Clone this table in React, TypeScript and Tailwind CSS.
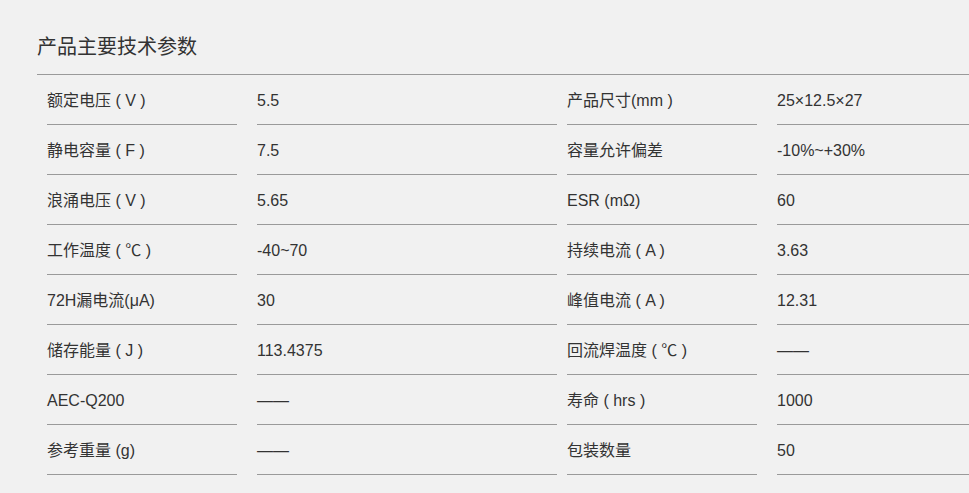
import React from 'react'

const rows: [string, string, string, string][] = [
  ['额定电压 ( V )', '5.5', '产品尺寸(mm )', '25×12.5×27'],
  ['静电容量 ( F )', '7.5', '容量允许偏差', '-10%~+30%'],
  ['浪涌电压 ( V )', '5.65', 'ESR (mΩ)', '60'],
  ['工作温度 ( ℃ )', '-40~70', '持续电流 ( A )', '3.63'],
  ['72H漏电流(μA)', '30', '峰值电流 ( A )', '12.31'],
  ['储存能量 ( J )', '113.4375', '回流焊温度 ( ℃ )', '——'],
  ['AEC-Q200', '——', '寿命 ( hrs )', '1000'],
  ['参考重量 (g)', '——', '包装数量', '50'],
]

function Cell({ text, wide }: { text: string; wide?: boolean }) {
  return (
    <div
      className={
        (wide ? 'w-[300px] ml-[20px] ' : 'w-[190px] ml-[10px] ') +
        'h-[50px] shrink-0 flex items-center border-b border-[#9a9a9a] text-[16px] text-[#333] whitespace-pre'
      }
    >
      <span className="pt-[3px]">{text}</span>
    </div>
  )
}

export default function App() {
  return (
    <div
      className="w-full h-[493px] overflow-hidden bg-[#f1f1f1]"
      style={{ fontFamily: '"Liberation Sans", "Noto Sans CJK SC", sans-serif' }}
    >
      <div className="pl-[37px]">
        {/* 标题 */}
        <div className="w-[1040px] pt-[35px] pb-[15px] border-b border-[#9a9a9a]">
          <h2 className="text-[20px] leading-[24px] text-[#333] font-normal">产品主要技术参数</h2>
        </div>

        {/* 参数表 */}
        <div className="w-[1040px] flex flex-col">
          {rows.map((r, i) => (
            <div key={i} className="flex">
              <Cell text={r[0]} />
              <Cell text={r[1]} wide />
              <Cell text={r[2]} />
              <Cell text={r[3]} wide />
            </div>
          ))}
        </div>
      </div>
    </div>
  )
}
